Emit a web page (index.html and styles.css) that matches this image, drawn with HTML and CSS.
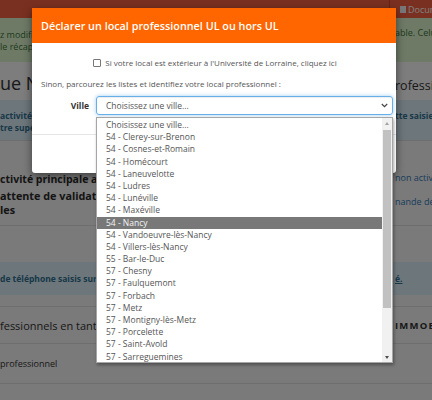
FILE: index.html
```html
<!DOCTYPE html>
<html lang="fr">
<head>
<meta charset="utf-8">
<title>Déclarer un local professionnel</title>
<link rel="stylesheet" href="styles.css">
</head>
<body>
<div class="page">
  <div class="topbar">
    <div class="tb-right"><span class="doc-ico"></span>Docum</div>
  </div>
  <div class="row alert-success">
    <div class="l"><p>z modifie</p><p>le récapi</p></div>
    <div class="r"><p>able. Celu</p></div>
  </div>
  <div class="row heading">
    <div class="l big">ue N</div>
    <div class="r mid-head"><span class="dash">rofessi</span></div>
  </div>
  <div class="row alert-info first-info">
    <div class="l"><p>activité</p><p>tre supé</p></div>
    <div class="r"><p>tte saisie</p></div>
  </div>
  <div class="row section-a">
    <div class="l strong-col">
      <p class="h">ctivité principale af</p>
      <p class="sub">attente de validati</p>
      <p class="sub">les</p>
    </div>
    <div class="r links"><p>non activi</p><p class="second">nande de</p></div>
  </div>
  <div class="section-b">
    <div class="row alert-info phone">
      <div class="l"><p>de téléphone saisis sur v</p></div>
      <div class="r"><p><u>é.</u></p></div>
    </div>
  </div>
  <div class="row section-c">
    <div class="l mid">fessionnels en tant</div>
    <div class="r caps">IMMOB</div>
  </div>
  <div class="row section-d">
    <div class="l small">professionnel</div>
  </div>
</div>

<div class="backdrop"></div>

<div class="modal">
  <div class="modal-header">
    <h4 class="modal-title">Déclarer un local professionnel UL ou hors UL</h4>
  </div>
  <div class="modal-body">
    <p class="check-line"><input type="checkbox" class="check"><span>Si votre local est extérieur à l'Université de Lorraine, cliquez ici</span></p>
    <p class="intro">Sinon, parcourez les listes et identifiez votre local professionnel :</p>
    <div class="field-row">
      <label class="field-label">Ville</label>
      <div class="select-wrap">
        <div class="select">
          <span>Choisissez une ville...</span>
          <svg class="chev" width="7" height="5" viewBox="0 0 7 5"><polyline points="0.8,1 3.5,3.7 6.2,1" fill="none" stroke="#444" stroke-width="1.2"/></svg>
        </div>
        <div class="dropdown">
          <ul class="opts">
            <li>Choisissez une ville...</li>
            <li>54 - Clerey-sur-Brenon</li>
            <li>54 - Cosnes-et-Romain</li>
            <li>54 - Homécourt</li>
            <li>54 - Laneuvelotte</li>
            <li>54 - Ludres</li>
            <li>54 - Lunéville</li>
            <li>54 - Maxéville</li>
            <li class="sel">54 - Nancy</li>
            <li>54 - Vandoeuvre-lès-Nancy</li>
            <li>54 - Villers-lès-Nancy</li>
            <li>55 - Bar-le-Duc</li>
            <li>57 - Chesny</li>
            <li>57 - Faulquemont</li>
            <li>57 - Forbach</li>
            <li>57 - Metz</li>
            <li>57 - Montigny-lès-Metz</li>
            <li>57 - Porcelette</li>
            <li>57 - Saint-Avold</li>
            <li>57 - Sarreguemines</li>
          </ul>
          <div class="sb">
            <div class="sb-btn"><span class="tri up"></span></div>
            <div class="sb-track"><div class="sb-thumb"></div></div>
            <div class="sb-btn"><span class="tri down"></span></div>
          </div>
        </div>
      </div>
    </div>
  </div>
  <div class="modal-footer"></div>
</div>
</body>
</html>
```

FILE: styles.css
```css
* { box-sizing: border-box; }
html, body { margin: 0; padding: 0; }
body {
  width: 432px;
  height: 400px;
  overflow: hidden;
  font-family: "Open Sans", "DejaVu Sans", sans-serif;
  position: relative;
}
p { margin: 0; }

/* ---------- background page ---------- */
.page {
  height: 400px;
  background: #f4f4f4;
  overflow: hidden;
  color: #333;
}
.topbar {
  height: 18px;
  background: #f46040;
  display: flex;
  justify-content: flex-end;
}
.tb-right {
  width: 43px;
  border-left: 1px solid #c8472c;
  display: flex;
  align-items: center;
  gap: 2px;
  padding-left: 10px;
  color: #fff;
  font-size: 9px;
  white-space: nowrap;
  overflow: hidden;
}
.doc-ico {
  width: 6px;
  height: 7px;
  background: #f0f0f0;
  flex: none;
}
.row {
  display: flex;
  justify-content: space-between;
}
.l { white-space: nowrap; overflow: hidden; }
.r { width: 37px; flex: none; white-space: nowrap; overflow: hidden; }

.alert-success {
  height: 44px;
  background: #dcf4cc;
  color: #3c763d;
  font-size: 9px;
  line-height: 12px;
  padding-top: 11px;
}
.alert-success .r { margin-top: -2px; }

.heading {
  height: 38px;
  background: #fafafa;
  color: #333;
  align-items: center;
  padding-top: 4px;
}
.big { font-size: 18px; line-height: 24px; }
.mid-head { font-size: 12.5px; line-height: 16px; padding-top: 6px; }
.dash { border-bottom: 1px dashed #999; padding-bottom: 2px; }

.alert-info {
  background: #d9edf7;
  color: #31708f;
  font-size: 8.5px;
  font-weight: 700;
  line-height: 12px;
}
.first-info {
  height: 41px;
  padding-top: 10px;
  border-bottom: 1px solid #ddd;
}

.section-a {
  height: 85px;
  border-bottom: 1px solid #ddd;
  padding-top: 31px;
}
.strong-col { font-weight: 700; color: #2a2a2a; }
.strong-col .h { font-size: 10.5px; line-height: 15px; }
.strong-col .sub { font-size: 10.8px; line-height: 14px; }
.strong-col .h + .sub { margin-top: 2px; }
.links { color: #337ab7; font-size: 9px; line-height: 12px; }
.links .second { margin-top: 12px; }

.section-b {
  height: 81px;
  padding-top: 36px;
  border-bottom: 1px solid #ddd;
}
.phone {
  height: 33px;
  align-items: center;
}

.section-c {
  height: 37px;
  align-items: center;
  border-bottom: 1px solid #ddd;
}
.mid { font-size: 11px; color: #333; }
.caps { font-size: 9.5px; font-weight: 700; letter-spacing: 1.2px; color: #333; }

.section-d {
  height: 40px;
  align-items: center;
  border-bottom: 1px solid #ddd;
}
.small { font-size: 9px; color: #333; }

/* ---------- backdrop ---------- */
.backdrop {
  position: absolute;
  inset: 0;
  background: rgba(0, 0, 0, 0.5);
}

/* ---------- modal ---------- */
.modal {
  position: absolute;
  left: 32px;
  top: 8px;
  width: 364px;
  background: #fff;
  box-shadow: 0 3px 9px rgba(0, 0, 0, 0.5);
  border-radius: 0 0 3px 3px;
}
.modal-header {
  height: 35px;
  background: #ff6600;
  padding: 0 9px;
  display: flex;
  align-items: center;
}
.modal-title {
  margin: 0;
  color: #fff;
  font-size: 10.8px;
  font-weight: 600;
}
.modal-body {
  height: 91px;
  padding: 14px 9px 0;
  color: #555;
}
.check-line {
  font-size: 8px;
  line-height: 12px;
  display: flex;
  justify-content: center;
  align-items: center;
  padding-left: 2px;
}
.check {
  appearance: none;
  -webkit-appearance: none;
  width: 8px;
  height: 8px;
  margin: 0 4px 0 0;
  border: 1px solid #777;
  border-radius: 1px;
  background: #fff;
}
.intro {
  margin-top: 9px;
  font-size: 8px;
  line-height: 12px;
}
.field-row {
  margin-top: 6px;
  display: flex;
  align-items: flex-start;
  margin-right: -6px;
}
.field-label {
  width: 48px;
  text-align: right;
  font-weight: 700;
  font-size: 8.5px;
  color: #333;
  line-height: 19px;
  margin-right: 7px;
  flex: none;
}
.select-wrap {
  position: relative;
  flex: 1;
}
.select {
  height: 19px;
  border: 1px solid #66afe9;
  border-radius: 3px;
  box-shadow: inset 0 1px 1px rgba(0,0,0,.075), 0 0 4px rgba(102,175,233,.6);
  padding: 0 4px 0 9px;
  display: flex;
  align-items: center;
  justify-content: space-between;
  font-size: 8.5px;
  color: #555;
}
.chev { display: block; }

.dropdown {
  position: absolute;
  top: calc(100% + 2px);
  left: 0;
  right: 0;
  height: 246px;
  background: #fff;
  border: 1px solid #a6a6a6;
  box-shadow: 1px 2px 3px rgba(0,0,0,.35);
  display: flex;
}
.opts {
  list-style: none;
  margin: 0;
  padding: 1px 0 0;
  flex: 1;
  overflow: hidden;
}
.opts li {
  height: 12.2px;
  line-height: 12.2px;
  padding-left: 9px;
  font-size: 8.5px;
  color: #555;
  white-space: nowrap;
}
.opts li.sel {
  background: #787878;
  color: #f4f4f4;
}
.sb {
  width: 10px;
  flex: none;
  background: #f1f1f1;
  display: flex;
  flex-direction: column;
}
.sb-btn {
  height: 10px;
  display: flex;
  align-items: center;
  justify-content: center;
}
.tri {
  width: 0;
  height: 0;
  border-left: 2.5px solid transparent;
  border-right: 2.5px solid transparent;
}
.tri.up { border-bottom: 3px solid #a3a3a3; }
.tri.down { border-top: 3px solid #505050; }
.sb-track { flex: 1; padding: 2px 1px 0; }
.sb-thumb {
  height: 178px;
  background: #c1c1c1;
}

.modal-footer {
  height: 39px;
  border-top: 1px solid #e5e5e5;
}
```
